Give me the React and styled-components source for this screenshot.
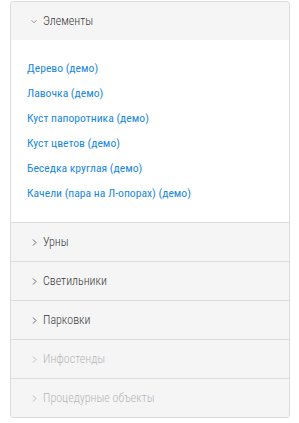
import React from "react";
import styled, { createGlobalStyle } from "styled-components";

const Global = createGlobalStyle`
  html, body { margin: 0; padding: 0; background: #fff; }
  body { font-family: "Roboto Condensed", Roboto, sans-serif; }
`;

const Panel = styled.div`
  margin: 1px 0 0 10px;
  width: 280px;
  box-sizing: border-box;
  border: 1px solid #dcdcdc;
  border-radius: 3px;
  overflow: hidden;
  background: #f5f5f5;
`;

const Section = styled.div`
  & + & { border-top: 1px solid #dcdcdc; }
`;

const Header = styled.div`
  height: 38px;
  display: flex;
  align-items: center;
  gap: 6px;
  padding-left: 20px;
  font-size: 12px;
  font-weight: 300;
  color: ${(p) => (p.$disabled ? "#b5b5b5" : "#3a3a3a")};
  background: #f5f5f5;
  cursor: pointer;
`;

const Chevron = styled.span`
  width: 6px;
  height: 8px;
  display: flex;
  align-items: center;
  justify-content: center;
`;

const Body = styled.div`
  background: #fff;
  padding: 16px;
  display: flex;
  flex-direction: column;
`;

const Item = styled.a`
  display: block;
  font-size: 11.65px;
  font-weight: 400;
  line-height: 25px;
  color: #1a88e0;
  text-decoration: none;
`;

const Down = () => (
  <svg width="7" height="5" viewBox="0 0 7 5">
    <path d="M0.5 1 L3.5 4 L6.5 1" fill="none" stroke="#888" strokeWidth="1" />
  </svg>
);
const Right = ({ c }) => (
  <svg width="5" height="7" viewBox="0 0 5 7">
    <path d="M1 0.5 L4 3.5 L1 6.5" fill="none" stroke={c} strokeWidth="1" />
  </svg>
);

const items = [
  "Дерево (демо)",
  "Лавочка (демо)",
  "Куст папоротника (демо)",
  "Куст цветов (демо)",
  "Беседка круглая (демо)",
  "Качели (пара на Л-опорах) (демо)",
];

const sections = [
  { title: "Урны" },
  { title: "Светильники" },
  { title: "Парковки" },
  { title: "Инфостенды", disabled: true },
  { title: "Процедурные объекты", disabled: true },
];

export default function App() {
  return (
    <>
      <Global />
      <Panel>
        <Section>
          <Header>
            <Chevron><Down /></Chevron>
            Элементы
          </Header>
          <Body>
            {items.map((t) => (
              <Item key={t} href="#">{t}</Item>
            ))}
          </Body>
        </Section>
        {sections.map((s) => (
          <Section key={s.title}>
            <Header $disabled={s.disabled}>
              <Chevron><Right c={s.disabled ? "#bbb" : "#666"} /></Chevron>
              {s.title}
            </Header>
          </Section>
        ))}
      </Panel>
    </>
  );
}
